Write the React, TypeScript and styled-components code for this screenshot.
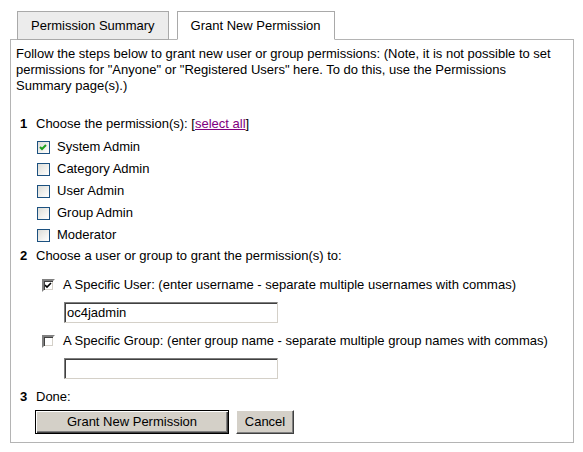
import React from "react";
import styled, { createGlobalStyle, css } from "styled-components";

const Global = createGlobalStyle`
  html, body { margin: 0; padding: 0; background: #fff; }
  body { font-family: Arial, "Liberation Sans", Helvetica, sans-serif; font-size: 13px; color: #000; }
`;

const Page = styled.div`
  padding: 11px 0 0 10px;
  width: 564px;
`;

const TabBar = styled.div`
  display: flex;
  gap: 8px;
  padding-left: 7px;
  position: relative;
  z-index: 1;
`;

const Tab = styled.div<{ $active?: boolean }>`
  height: 27px;
  padding: 0 13px;
  display: flex;
  align-items: center;
  border: 1px solid #a9a9a9;
  background: #ececec;
  line-height: 16px;
  ${(p) =>
    p.$active &&
    css`
      background: #fff;
      border-bottom-color: #fff;
    `}
`;

const Panel = styled.div`
  margin-top: -1px;
  border: 1px solid #b4b4b4;
  padding: 6px 5px 0 5px;
  box-sizing: border-box;
  height: 404px;
  line-height: 16px;
`;

const Intro = styled.p`
  margin: 0 0 22px 0;
`;

const Step = styled.div<{ $mt?: number }>`
  display: flex;
  padding-left: 4px;
  margin-top: ${(p) => p.$mt ?? 0}px;
`;

const StepNum = styled.b`
  width: 16px;
  flex: none;
`;

const StepBody = styled.div`
  flex: 1;
`;

const Link = styled.a`
  color: #800080;
  text-decoration: underline;
`;

const PermList = styled.div`
  display: flex;
  flex-direction: column;
  padding: 4px 0 2px 21px;
`;

const PermRow = styled.label`
  display: flex;
  align-items: center;
  height: 22px;
  gap: 7px;
`;

const XpBox = styled.span`
  width: 11px;
  height: 11px;
  border: 1px solid #1c5180;
  background: linear-gradient(135deg, #dcdcd7 0%, #f2f2ef 60%, #ffffff 100%);
  display: inline-flex;
  align-items: center;
  justify-content: center;
  flex: none;
`;

const ClassicBox = styled.span`
  width: 9px;
  height: 9px;
  border-style: solid;
  border-width: 2px;
  border-color: #808080 #ffffff #ffffff #808080;
  box-shadow: inset 1px 1px 0 #404040, inset -1px -1px 0 #d4d0c8;
  background: #fff;
  display: inline-flex;
  align-items: center;
  justify-content: center;
  flex: none;
`;

const TargetRow = styled.label<{ $mt: number }>`
  display: flex;
  align-items: center;
  height: 22px;
  gap: 8px;
  padding-left: 26px;
  margin-top: ${(p) => p.$mt}px;
`;

const InputRow = styled.div`
  padding: 6px 0 0 48px;
`;

const TextBox = styled.div`
  width: 208px;
  height: 15px;
  border-style: solid;
  border-width: 1px;
  border-color: #7f7f7f #d4d0c8 #d4d0c8 #7f7f7f;
  box-shadow: inset 1px 1px 0 #404040, inset -1px -1px 0 #ffffff;
  padding: 2px;
  line-height: 15px;
  font-size: 13px;
`;

const ButtonRow = styled.div`
  display: flex;
  gap: 7px;
  padding: 5px 0 0 19px;
`;

const Button = styled.div<{ $default?: boolean; $w: number }>`
  width: ${(p) => p.$w}px;
  height: 24px;
  box-sizing: border-box;
  background: #d4d0c8;
  display: flex;
  align-items: center;
  justify-content: center;
  border-style: solid;
  border-width: 1px;
  border-color: #ffffff #404040 #404040 #ffffff;
  box-shadow: inset -1px -1px 0 #808080, inset 1px 1px 0 #d4d0c8;
  ${(p) =>
    p.$default &&
    css`
      border: 1px solid #000;
      box-shadow: inset 1px 1px 0 #ffffff, inset -1px -1px 0 #404040, inset -2px -2px 0 #808080;
    `}
`;

const GreenCheck = () => (
  <svg width="9" height="9" viewBox="0 0 9 9">
    <path d="M1 4 L3 6 L7 2" stroke="#21a121" strokeWidth="2" fill="none" />
  </svg>
);

const BlackCheck = () => (
  <svg width="7" height="7" viewBox="0 0 7 7">
    <path d="M0 3 L2 5 L6 1" stroke="#000" strokeWidth="1.6" fill="none" />
  </svg>
);

const perms = [
  { name: "System Admin", checked: true },
  { name: "Category Admin", checked: false },
  { name: "User Admin", checked: false },
  { name: "Group Admin", checked: false },
  { name: "Moderator", checked: false },
];

export default function App() {
  return (
    <>
      <Global />
      <Page>
        <TabBar>
          <Tab>Permission Summary</Tab>
          <Tab $active>Grant New Permission</Tab>
        </TabBar>
        <Panel>
          <Intro>
            Follow the steps below to grant new user or group permissions: (Note, it is not possible to set
            <br />
            permissions for "Anyone" or "Registered Users" here. To do this, use the Permissions
            <br />
            Summary page(s).)
          </Intro>
          <Step>
            <StepNum>1</StepNum>
            <StepBody>
              Choose the permission(s): [<Link href="#">select all</Link>]
            </StepBody>
          </Step>
          <PermList>
            {perms.map((p) => (
              <PermRow key={p.name}>
                <XpBox>{p.checked && <GreenCheck />}</XpBox>
                {p.name}
              </PermRow>
            ))}
          </PermList>
          <Step>
            <StepNum>2</StepNum>
            <StepBody>Choose a user or group to grant the permission(s) to:</StepBody>
          </Step>
          <TargetRow $mt={10}>
            <ClassicBox>
              <BlackCheck />
            </ClassicBox>
            A Specific User: (enter username - separate multiple usernames with commas)
          </TargetRow>
          <InputRow>
            <TextBox>oc4jadmin</TextBox>
          </InputRow>
          <TargetRow $mt={7}>
            <ClassicBox />
            A Specific Group: (enter group name - separate multiple group names with commas)
          </TargetRow>
          <InputRow>
            <TextBox />
          </InputRow>
          <Step $mt={10}>
            <StepNum>3</StepNum>
            <StepBody>Done:</StepBody>
          </Step>
          <ButtonRow>
            <Button $default $w={194}>Grant New Permission</Button>
            <Button $w={58}>Cancel</Button>
          </ButtonRow>
        </Panel>
      </Page>
    </>
  );
}
